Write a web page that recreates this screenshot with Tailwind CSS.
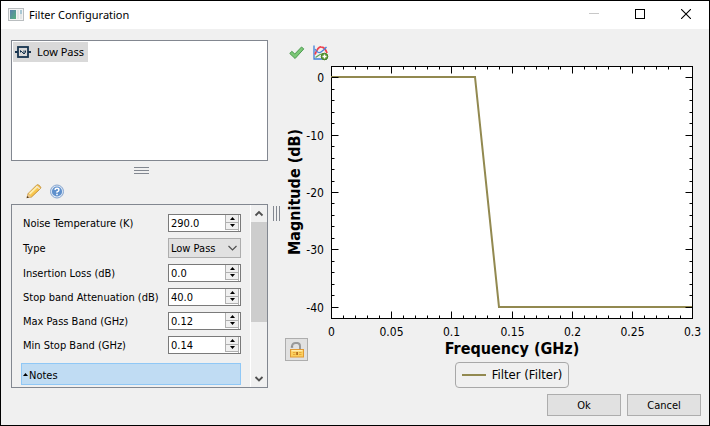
<!DOCTYPE html>
<html lang="en">
<head>
  <meta charset="UTF-8" />
  <meta name="viewport" content="width=device-width, initial-scale=1.0"/>
  <title>Filter Configuration</title>
  <script src="https://cdn.jsdelivr.net/npm/@tailwindcss/browser@4"></script>
</head>
<body class="h-screen bg-[#f0f0f0] font-['DejaVu_Sans_Condensed','DejaVu_Sans',sans-serif] text-[11px] text-black">
  <div class="flex h-full flex-col border border-black">
    <header class="flex h-7 shrink-0 items-center bg-white pl-[7px] font-['Noto_Sans',sans-serif]">
      <svg class="size-4 shrink-0" viewBox="0 0 16 16" aria-hidden="true">
        <defs>
          <linearGradient id="appIcon" x1="0" y1="0" x2="1" y2="1">
            <stop offset="0" stop-color="#5a7fae"/><stop offset="1" stop-color="#55b07c"/>
          </linearGradient>
        </defs>
        <rect x=".5" y="1.5" width="15" height="12" fill="#f4f4f4" stroke="#b9bdbf"/>
        <rect x="2" y="3" width="6" height="9" fill="url(#appIcon)"/>
        <rect x="9" y="3" width="2" height="9" fill="#e3e6e6"/>
        <rect x="12" y="3" width="2" height="4" fill="#a9c8d4"/>
        <rect x="12" y="7" width="2" height="5" fill="#e3e6e6"/>
      </svg>
      <h1 class="ml-[5px]">Filter Configuration</h1>
      <div class="ml-auto flex">
        <button type="button" aria-label="Minimize" class="flex h-7 w-[46px] items-center justify-center pb-[2px]" disabled>
          <svg class="size-[10px]" viewBox="0 0 10 10"><path d="M0 4.5h10" stroke="#c8c8c8"/></svg>
        </button>
        <button type="button" aria-label="Maximize" class="flex h-7 w-[46px] items-center justify-center pb-[3px]">
          <svg class="size-[10px]" viewBox="0 0 10 10"><rect x=".5" y=".5" width="9" height="9" fill="none" stroke="#000"/></svg>
        </button>
        <button type="button" aria-label="Close" class="flex h-7 w-[46px] items-center justify-center pb-[3px]">
          <svg class="size-[10px]" viewBox="0 0 10 10"><path d="M0 0l10 10M10 0L0 10" stroke="#000" stroke-width="1.1"/></svg>
        </button>
      </div>
    </header>

    <main class="flex min-h-0 flex-1 pt-[11px] pl-[10px]">
      <!-- filters and their properties -->
      <section class="flex w-[257px] shrink-0 flex-col">
        <ul class="h-[121px] shrink-0 border border-[#828790] bg-white p-px">
          <li class="flex h-5 w-[75px] items-center gap-1.5 bg-[#d9d9d9] pl-[2px] font-['Noto_Sans',sans-serif] whitespace-nowrap">
            <svg class="h-3 w-4 shrink-0" viewBox="0 0 16 12" fill="none" stroke="#17344f" aria-hidden="true">
              <rect x="3" y="1" width="10" height="10" stroke-width="1.8"/>
              <path d="M0 6h3M13 6h3" stroke-width="2"/>
              <path d="M5.500 6.500V4.500L9 8V4.500M9 8l1.500-1.500V4.500" stroke-width="1"/>
            </svg>
            Low Pass
          </li>
        </ul>
        <div class="flex h-[23px] shrink-0 flex-col items-center justify-center gap-[2px] pb-1 pl-1">
          <i class="h-px w-[15px] bg-[#828790]"></i>
          <i class="h-px w-[15px] bg-[#828790]"></i>
          <i class="h-px w-[15px] bg-[#828790]"></i>
        </div>
        <div class="flex h-5 shrink-0 gap-[7px] pl-[15px]">
          <button type="button" aria-label="Edit" class="size-4">
            <svg viewBox="0 0 16 16">
              <path d="M1 13.500l1.200-4L10.500 1.200q1.200-1 2.300 0l1.500 1.300q1 1.200 0 2.200L5.500 13z" fill="#f8c64f" stroke="#c08a30" stroke-width=".9"/>
              <path d="M3.500 10L11.500 2.300" stroke="#fdeeb0" stroke-width="1.800"/>
              <path d="M10.500 2l3.300 3" stroke="#eee4d4" stroke-width="1.300"/>
              <path d="M.8 14l1.200-4 3.200 2.900z" fill="#e6c79a"/>
              <path d="M.6 14.200l.7-2.200 1.700 1.500z" fill="#4e3517"/>
            </svg>
          </button>
          <button type="button" aria-label="Help" class="size-4">
            <svg viewBox="0 0 16 16">
              <circle cx="8" cy="7.500" r="6.500" fill="#dfe9f6" stroke="#86a5cf"/>
              <circle cx="8" cy="7.500" r="5.100" fill="#5f90cc"/>
              <path d="M6 6Q6.100 4.300 8 4.300t1.900 1.600Q9.900 7 8 7.900v.9" fill="none" stroke="#fff" stroke-width="1.500"/>
              <rect x="7.200" y="9.700" width="1.600" height="1.500" fill="#fff"/>
            </svg>
          </button>
        </div>

        <div class="flex min-h-0 flex-1 border border-[#828790]">
          <form class="flex min-w-0 flex-1 flex-col overflow-hidden pt-[9px] pr-[9px] pl-[9px]">
            <div id="fields" class="flex flex-col gap-1.5 pl-[2px]"></div>
            <button type="button" class="mt-[9px] flex h-[22px] shrink-0 items-center gap-px border border-[#90c8f6] bg-[#c0dcf3] pt-1 pl-px">
              <svg class="mb-1 h-[3px] w-[5px]" viewBox="0 0 5 3"><path d="M0 3L2.500 0 5 3z"/></svg>Notes
            </button>
          </form>
          <div class="flex w-[17px] shrink-0 flex-col items-center border-l border-white">
            <svg class="h-[17px] w-4 shrink-0" viewBox="0 0 16 17"><path d="M4.500 10.500L8 7l3.500 3.500" fill="none" stroke="#505050" stroke-width="1.8"/></svg>
            <div class="h-[100px] w-full bg-[#cdcdcd]"></div>
            <svg class="mt-auto h-[17px] w-4 shrink-0" viewBox="0 0 16 17"><path d="M4.500 7L8 10.500 11.500 7" fill="none" stroke="#505050" stroke-width="1.8"/></svg>
          </div>
        </div>
      </section>

      <div class="flex w-[17px] shrink-0 items-center justify-center gap-[2px] pb-[2px]">
        <i class="h-[15px] w-px bg-[#828790]"></i>
        <i class="h-[15px] w-px bg-[#828790]"></i>
        <i class="h-[15px] w-px bg-[#828790]"></i>
      </div>

      <!-- response plot -->
      <section class="relative flex min-w-0 flex-1 flex-col">
        <div class="flex h-[22px] shrink-0 gap-2 pt-[5px] pl-1">
          <button type="button" aria-label="Apply" class="size-4">
            <svg viewBox="0 0 16 16"><path d="M.8 8.500l2-2.200 3 2.700 6.700-7 2.300 1.900-8.700 9.600z" fill="#7cc877" stroke="#4c9a50"/></svg>
          </button>
          <button type="button" aria-label="Add plot" class="size-4">
            <svg viewBox="0 0 16 16" fill="none">
              <path d="M1 .5v13.500H14" stroke="#3f7fd6" stroke-width="1.300"/>
              <path d="M2 9.500Q5 1.500 8 1.800q4 .2 6 6.200" stroke="#f0404c" stroke-width="1.800"/>
              <path d="M2 4q3 5 6 3t5.500-5" stroke="#4a86dc" stroke-width="1.300"/>
              <path d="M2.500 12.500Q7 9 10 8.500" stroke="#5ea556" stroke-width="1.200"/>
              <circle cx="11.500" cy="11.500" r="3.300" fill="#5d9a35" stroke="#4a8228"/>
              <path d="M9.500 11.500h4M11.500 9.500v4" stroke="#fff" stroke-width="1.400"/>
            </svg>
          </button>
        </div>
        <svg id="plot" class="min-h-0 w-full flex-1" viewBox="0 0 424 296" role="img" aria-label="Magnitude (dB) against Frequency (GHz)"></svg>
        <div class="flex h-[30px] shrink-0 justify-center pl-[30px]">
          <div class="mt-1 flex h-[26px] items-center gap-1.5 rounded border border-[#a8a8a8] px-1.5 text-[13px] whitespace-nowrap">
            <i class="h-[2px] w-6 bg-[#928950]"></i>Filter (Filter)
          </div>
        </div>
        <button type="button" aria-label="Unlock axes" class="absolute bottom-[27px] left-0 flex size-[23px] items-center justify-center border border-[#adadad] bg-[#e1e1e1]">
          <svg class="size-4" viewBox="0 0 16 16">
            <path d="M3 5V4Q3.500 1 6.500 1H8.500q2.500.5 2.500 3v3" fill="none" stroke="#999" stroke-width="2"/>
            <path d="M1.800 4.500h2.400v1.200H1.800z" fill="#858585"/>
            <rect x="1.500" y="7.500" width="13" height="7.500" fill="#fbcf5e" stroke="#e09a34"/>
            <path d="M2.500 8.700h11" stroke="#fff0b8" stroke-width="1.200"/>
            <path d="M4 10.500h2.500M4 12.500h2.500M10 10.500h2.500M10 12.500h2.500" stroke="#e8a838"/>
            <rect x="7.200" y="10" width="1.800" height="3" fill="#b3701f"/>
          </svg>
        </button>
      </section>
    </main>

    <footer class="flex h-[37px] shrink-0 items-start justify-end gap-1.5 pt-[6px] pr-2">
      <button type="button" class="h-[22px] w-[74px] border border-[#adadad] bg-[#e1e1e1] pt-[2px]">Ok</button>
      <button type="button" class="h-[22px] w-[74px] border border-[#adadad] bg-[#e1e1e1] pt-[2px]">Cancel</button>
    </footer>
  </div>

  <script>
    const fields = [
      { id: 'noise', label: 'Noise Temperature (K)', value: '290.0' },
      { id: 'type', label: 'Type', options: ['Low Pass'] },
      { id: 'loss', label: 'Insertion Loss (dB)', value: '0.0' },
      { id: 'attenuation', label: 'Stop band Attenuation (dB)', value: '40.0' },
      { id: 'maxPass', label: 'Max Pass Band (GHz)', value: '0.12' },
      { id: 'minStop', label: 'Min Stop Band (GHz)', value: '0.14' },
    ];

    const spinner = `
      <span class="mr-px flex w-[14px] shrink-0 flex-col border-r border-[#b0b0b0] pb-px">
        <button type="button" tabindex="-1" aria-label="Increase" class="flex flex-1 items-center justify-center border-b border-l border-[#b0b0b0] bg-[#f0f0f0]"><svg class="h-[3px] w-[5px]" viewBox="0 0 5 3"><path d="M0 3L2.500 0 5 3z"/></svg></button>
        <button type="button" tabindex="-1" aria-label="Decrease" class="flex flex-1 items-center justify-center border-b border-l border-[#b0b0b0] bg-[#f0f0f0]"><svg class="h-[3px] w-[5px]" viewBox="0 0 5 3"><path d="M0 0L2.500 3 5 0z"/></svg></button>
      </span>`;

    document.getElementById('fields').innerHTML = fields.map(f => {
      const control = f.options
        ? `<div class="relative w-[73px] shrink-0">
            <select id="${f.id}" class="block h-5 w-full appearance-none border border-[#adadad] bg-[#e1e1e1] pt-[2px] pl-[2px]">${f.options.map(o => `<option>${o}</option>`).join('')}</select>
            <svg class="pointer-events-none absolute top-[7px] right-1 h-[6px] w-[9px]" viewBox="0 0 9 6"><path d="M.5 1l4 4 4-4" fill="none" stroke="#505050" stroke-width="1.200"/></svg>
          </div>`
        : `<div class="flex h-[18px] w-[73px] shrink-0 border border-[#7a7a7a] bg-white">
            <input id="${f.id}" type="text" inputmode="decimal" value="${f.value}" class="w-full min-w-0 flex-1 pt-[2px] pl-[2px] outline-none"/>${spinner}
          </div>`;
      return `<div class="flex items-center justify-between"><label for="${f.id}" class="pt-[2px] leading-4 whitespace-nowrap">${f.label}</label>${control}</div>`;
    }).join('');

    // plot area inside the viewBox
    const area = { left: 46.5, right: 407.5, top: 4.5, bottom: 256.5 };
    const xMax = 0.3, yMax = 2, yMin = -42;
    const px = x => area.left + x / xMax * (area.right - area.left);
    const py = y => area.top + (yMax - y) / (yMax - yMin) * (area.bottom - area.top);
    const snap = v => Math.floor(v) + 0.5;

    let ticks = '', labels = '';
    for (let i = 0; i <= 30; i++) {
      const x = snap(px(i / 100));
      const len = i % 5 ? 3 : 7;
      ticks += `M${x} ${area.top}v${len}M${x} ${area.bottom}v-${len}`;
      if (i % 5 === 0) labels += `<text x="${x}" y="274" text-anchor="middle">${i / 100}</text>`;
    }
    for (let v = 0; v >= -40; v -= 2) {
      const y = snap(py(v));
      const len = v % 10 ? 3 : 7;
      ticks += `M${area.left} ${y}h${len}M${area.right} ${y}h-${len}`;
      if (v % 10 === 0) labels += `<text x="39" y="${y + 4}" text-anchor="end">${v}</text>`;
    }

    const response = [[0, 0], [0.12, 0], [0.14, -40], [0.3, -40]];
    const points = response.map(([x, y]) => `${Math.floor(px(x))},${Math.floor(py(y))}`).join(' ');

    document.getElementById('plot').innerHTML = `
      <rect x="${area.left}" y="${area.top}" width="${area.right - area.left}" height="${area.bottom - area.top}" fill="#fff" stroke="#000"/>
      <polyline points="${points}" fill="none" stroke="#928950" stroke-width="2"/>
      <path d="${ticks}" stroke="#000"/>
      <g class="text-xs">${labels}</g>
      <text x="227" y="292" text-anchor="middle" class="font-['DejaVu_Sans_Condensed','DejaVu_Sans',sans-serif] text-base font-bold">Frequency (GHz)</text>
      <text transform="translate(15 130) rotate(-90)" text-anchor="middle" class="font-['DejaVu_Sans_Condensed','DejaVu_Sans',sans-serif] text-base font-bold">Magnitude (dB)</text>`;
  </script>
</body>
</html>
